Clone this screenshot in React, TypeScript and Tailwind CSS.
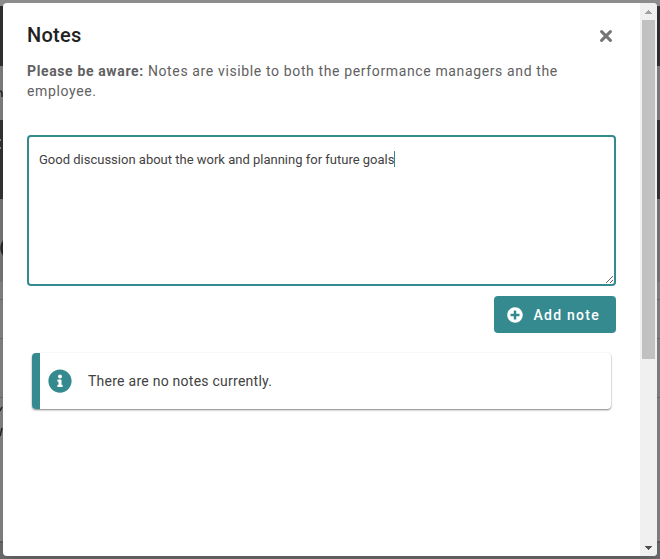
import { useState } from "react";
import { FaInfoCircle, FaPlusCircle } from "react-icons/fa";

const CloseIcon = () => (
  <svg className="w-3 h-3" viewBox="0 0 12 12" fill="none" stroke="currentColor" strokeWidth="3" strokeLinecap="round" aria-hidden="true">
    <path d="M1.6 1.6 10.4 10.4M10.4 1.6 1.6 10.4" />
  </svg>
);

// Dimmed page behind the dialog, only its edges show
const Backdrop = () => (
  <div className="absolute inset-0 -z-10 flex flex-col bg-[#808080]" aria-hidden="true">
    <div className="h-1.5 bg-[#8c8c8c]" />
    <div className="h-[60px] bg-[#303030]" />
    <div className="h-[54px] bg-[#7d7d7d]" />
    <div className="h-[79px] bg-[#333333]" />
    <div className="h-[83px] bg-[#757577]" />
    <div className="h-[17px]" />
    <div className="h-10 border-y border-[#6b6b6b]" />
    <div className="h-[59px] border-b border-[#6b6b6b]" />
    <div className="flex-1" />
    <div className="h-[18px] border-t-2 border-[#5c5c5c] bg-[#696a6c]" />
    <svg className="absolute left-0 top-0 w-[3px] h-[450px]" viewBox="0 0 3 450" fill="none" stroke="#262626">
      <path d="M0 91q2 0 2 3v3" strokeWidth="1.5" />
      <path d="M0 140h1M0 148h1" stroke="#9a8470" strokeWidth="2" />
      <path d="M4 241q-5 7 0 14" strokeWidth="2.5" />
      <path d="M2 407 0 411M2 428 0 436" strokeWidth="1.5" />
    </svg>
  </div>
);

const Scrollbar = () => (
  <div className="shrink-0 w-[17px] flex flex-col items-center bg-[#f0f0f0]" aria-hidden="true">
    <div className="h-[17px] flex items-center">
      <svg className="w-[7px] h-1" viewBox="0 0 7 4" shapeRendering="crispEdges">
        <path d="M3 0h1v1h1v1h1v1h1v1H0V3h1V2h1V1h1z" fill="#a0a0a0" />
      </svg>
    </div>
    <div className="flex-1 w-[13px]">
      <div className="h-[65.4%] bg-[#c1c1c1]" />
    </div>
    <div className="h-[17px] flex items-center">
      <svg className="w-[7px] h-1" viewBox="0 0 7 4" shapeRendering="crispEdges">
        <path d="M0 0h7v1H6v1H5v1H4v1H3V3H2V2H1V1H0z" fill="#505050" />
      </svg>
    </div>
  </div>
);

const App = () => {
  const [note, setNote] = useState("Good discussion about the work and planning for future goals");

  return (
    <div className="relative isolate h-screen p-[3px] flex font-[Roboto,sans-serif]">
      <Backdrop />

      <div role="dialog" aria-labelledby="notes-title" className="flex-1 min-w-0 flex rounded bg-white overflow-hidden shadow-lg">
        <div className="flex-1 min-w-0 px-6 pt-5 overflow-hidden">
          {/* Header */}
          <div className="flex items-center justify-between">
            <h1 id="notes-title" className="text-xl leading-6 font-medium tracking-[0.0125em] text-[#212121]">Notes</h1>
            <button type="button" aria-label="Close" className="p-1 pt-1.5 text-[#757575]">
              <CloseIcon />
            </button>
          </div>
          <p className="mt-3.5 text-sm leading-5 tracking-[0.045em] text-[#616161]">
            <strong className="font-bold">Please be aware:</strong> Notes are visible to both the performance managers and the employee.
          </p>

          {/* Note editor */}
          <div className="relative mt-[34px]">
            <textarea
              aria-label="Note"
              value={note}
              onChange={(e) => setNote(e.target.value)}
              className="block w-full h-[151px] px-2.5 py-3 border-2 border-[#358a90] rounded text-[13px] leading-[22px] text-[#424242] outline-none resize caret-transparent"
            />
            <span className="absolute left-[367px] top-4 w-px h-4 bg-[#358a90]" />
          </div>
          <div className="mt-2.5 flex justify-end">
            <button type="button" className="h-[37px] pl-[13px] pr-4 flex items-center gap-2.5 rounded bg-[#358a90] text-sm leading-5 font-medium tracking-[0.09em] text-white">
              <FaPlusCircle className="w-4 h-4" />
              Add note
            </button>
          </div>

          {/* Empty state */}
          <div className="mx-[5px] mt-5 h-14 pl-2 flex items-center gap-4 border-l-8 border-[#358a90] rounded shadow-[0_1px_2px_rgba(0,0,0,0.5)]">
            <FaInfoCircle className="w-6 h-6 text-[#358a90]" />
            <p className="text-sm text-[#424242] tracking-[0.018em]">There are no notes currently.</p>
          </div>
        </div>

        <Scrollbar />
      </div>
    </div>
  );
};

export default App;
